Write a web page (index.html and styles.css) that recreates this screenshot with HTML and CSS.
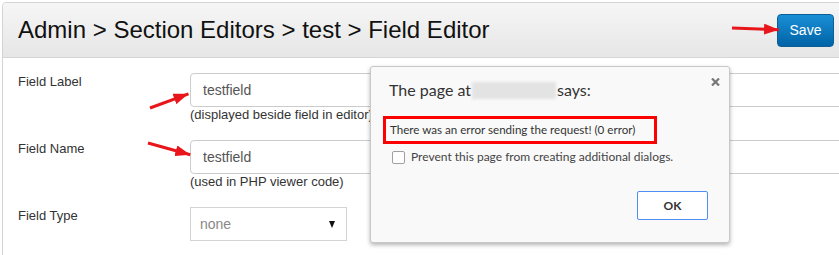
FILE: index.html
```html
<!DOCTYPE html>
<html lang="en">
<head>
    <meta charset="UTF-8">
    <title>Field Editor</title>
    <link rel="stylesheet" href="styles.css">
</head>
<body>

<div class="page">
    <div class="panel">
        <div class="panel-head">
            <h1>Admin &gt; Section Editors &gt; test &gt; Field Editor</h1>
            <button class="btn-save">Save</button>
        </div>
        <form class="panel-body">
            <div class="form-row">
                <label class="form-label">Field Label</label>
                <div class="field">
                    <input class="text-input" type="text" value="testfield">
                    <div class="help">(displayed beside field in editor)</div>
                </div>
            </div>
            <div class="form-row">
                <label class="form-label">Field Name</label>
                <div class="field">
                    <input class="text-input" type="text" value="testfield">
                    <div class="help">(used in PHP viewer code)</div>
                </div>
            </div>
            <div class="form-row">
                <label class="form-label">Field Type</label>
                <div class="field">
                    <div class="select">
                        <span>none</span>
                        <span class="caret"></span>
                    </div>
                </div>
            </div>
        </form>
    </div>

    <div class="dialog">
        <svg class="dialog-close" width="9" height="8" viewBox="0 0 9 8">
            <path d="M1 0.5 L8 7.5 M8 0.5 L1 7.5" stroke="#777" stroke-width="2.2"/>
        </svg>
        <div class="dialog-title">The page at<span class="host"></span>says:</div>
        <div class="dialog-msg">There was an error sending the request! (0 error)</div>
        <label class="dialog-check"><span class="box"></span>Prevent this page from creating additional dialogs.</label>
        <div class="dialog-actions">
            <button class="btn-ok">OK</button>
        </div>
    </div>

    <!-- annotation arrows -->
    <svg class="arrows" width="839" height="255" viewBox="0 0 839 255">
        <defs>
            <marker id="head" markerWidth="15" markerHeight="11" refX="15" refY="5.5" orient="auto" markerUnits="userSpaceOnUse">
                <path d="M0 0 L15 5.5 L0 11 Z" fill="#e8161b"/>
            </marker>
        </defs>
        <line x1="732" y1="28" x2="779" y2="29.7" marker-end="url(#head)"/>
        <line x1="150" y1="108" x2="188.5" y2="93.8" marker-end="url(#head)"/>
        <line x1="148" y1="143" x2="190.3" y2="154.8" marker-end="url(#head)"/>
    </svg>
</div>

</body>
</html>
```

FILE: styles.css
```css
body {
    margin: 0;
    font-family: "Liberation Sans", Arial, sans-serif;
    background-color: #fff;
    overflow: hidden;
}
.page {
    position: relative;
    width: 839px;
    height: 255px;
    padding: 2px 0 0 2px;
    box-sizing: border-box;
    overflow: hidden;
}
.panel {
    width: 850px;
    border: 1px solid #d4d4d4;
    border-radius: 4px;
    height: 300px;
}
.panel-head {
    display: flex;
    justify-content: space-between;
    align-items: center;
    height: 54px;
    padding: 0 19px 0 15px;
    background: linear-gradient(#f6f6f6, #e6e6e6);
    border-bottom: 1px solid #d6d6d6;
    border-radius: 4px 4px 0 0;
}
.panel-head h1 {
    margin: 0;
    font-size: 24px;
    font-weight: normal;
    color: #111;
}
.btn-save {
    width: 57px;
    height: 33px;
    padding: 0;
    font-family: "Liberation Sans", Arial, sans-serif;
    font-size: 14px;
    color: #fff;
    background: linear-gradient(#1a8fd6, #0063a6);
    border: 1px solid #0b5f96;
    border-radius: 4px;
}
.panel-body {
    padding: 15px 0 0 15px;
    margin: 0;
}
.form-row {
    display: grid;
    grid-template-columns: 172px 1fr;
    margin-bottom: 17px;
}
.form-label {
    font-size: 13px;
    line-height: 18px;
    color: #333;
}
.text-input {
    display: block;
    width: 700px;
    height: 34px;
    box-sizing: border-box;
    padding: 0 12px;
    font-family: "Liberation Sans", Arial, sans-serif;
    font-size: 14px;
    color: #555;
    border: 1px solid #ccc;
    border-radius: 4px;
}
.help {
    font-size: 13px;
    line-height: 16px;
    color: #333;
}
.select {
    display: flex;
    justify-content: space-between;
    align-items: center;
    width: 157px;
    height: 34px;
    box-sizing: border-box;
    padding: 0 8px 0 9px;
    font-size: 14px;
    color: #888;
    border: 1px solid #d4d4d4;
}
.caret {
    width: 0;
    height: 0;
    border-left: 3.5px solid transparent;
    border-right: 3.5px solid transparent;
    border-top: 7px solid #111;
    margin-right: 3px;
}
.dialog {
    position: absolute;
    left: 370px;
    top: 66px;
    width: 360px;
    height: 177px;
    box-sizing: border-box;
    padding: 13px 0 0 0;
    font-family: Lato, "Noto Sans", sans-serif;
    background-color: #f9f9f9;
    border: 1px solid #c8c8c8;
    border-radius: 3px;
    box-shadow: 0 2px 4px rgba(0, 0, 0, 0.3);
}
.dialog-close {
    position: absolute;
    top: 11px;
    right: 9px;
}
.dialog-title {
    padding-left: 18px;
    font-size: 16px;
    line-height: 20px;
    color: #333;
    white-space: nowrap;
}
.host {
    display: inline-block;
    width: 84px;
    height: 17px;
    margin: 0 1px;
    vertical-align: -3px;
    background-color: #e3e3e3;
    filter: blur(1.5px);
}
.dialog-msg {
    width: 274px;
    height: 28px;
    box-sizing: border-box;
    margin: 16px 0 0 12px;
    padding-left: 4px;
    font-size: 11.6px;
    line-height: 22px;
    color: #333;
    white-space: nowrap;
    border: 3px solid #f00;
}
.dialog-check {
    display: flex;
    align-items: center;
    gap: 6px;
    margin: 5px 0 0 21px;
    font-size: 12px;
    line-height: 16px;
    color: #444;
    white-space: nowrap;
}
.box {
    width: 13px;
    height: 13px;
    box-sizing: border-box;
    background-color: #fff;
    border: 1px solid #a0a0a0;
    border-radius: 2px;
}
.dialog-actions {
    display: flex;
    justify-content: flex-end;
    padding-right: 21px;
    margin-top: 26px;
}
.btn-ok {
    width: 71px;
    height: 29px;
    font-family: Lato, "Noto Sans", sans-serif;
    font-size: 12px;
    font-weight: bold;
    color: #333;
    background-color: #fff;
    border: 1px solid #4d8ff5;
    border-radius: 2px;
}
.arrows {
    position: absolute;
    left: 0;
    top: 0;
    pointer-events: none;
}
.arrows line {
    stroke: #e8161b;
    stroke-width: 3;
}
```
